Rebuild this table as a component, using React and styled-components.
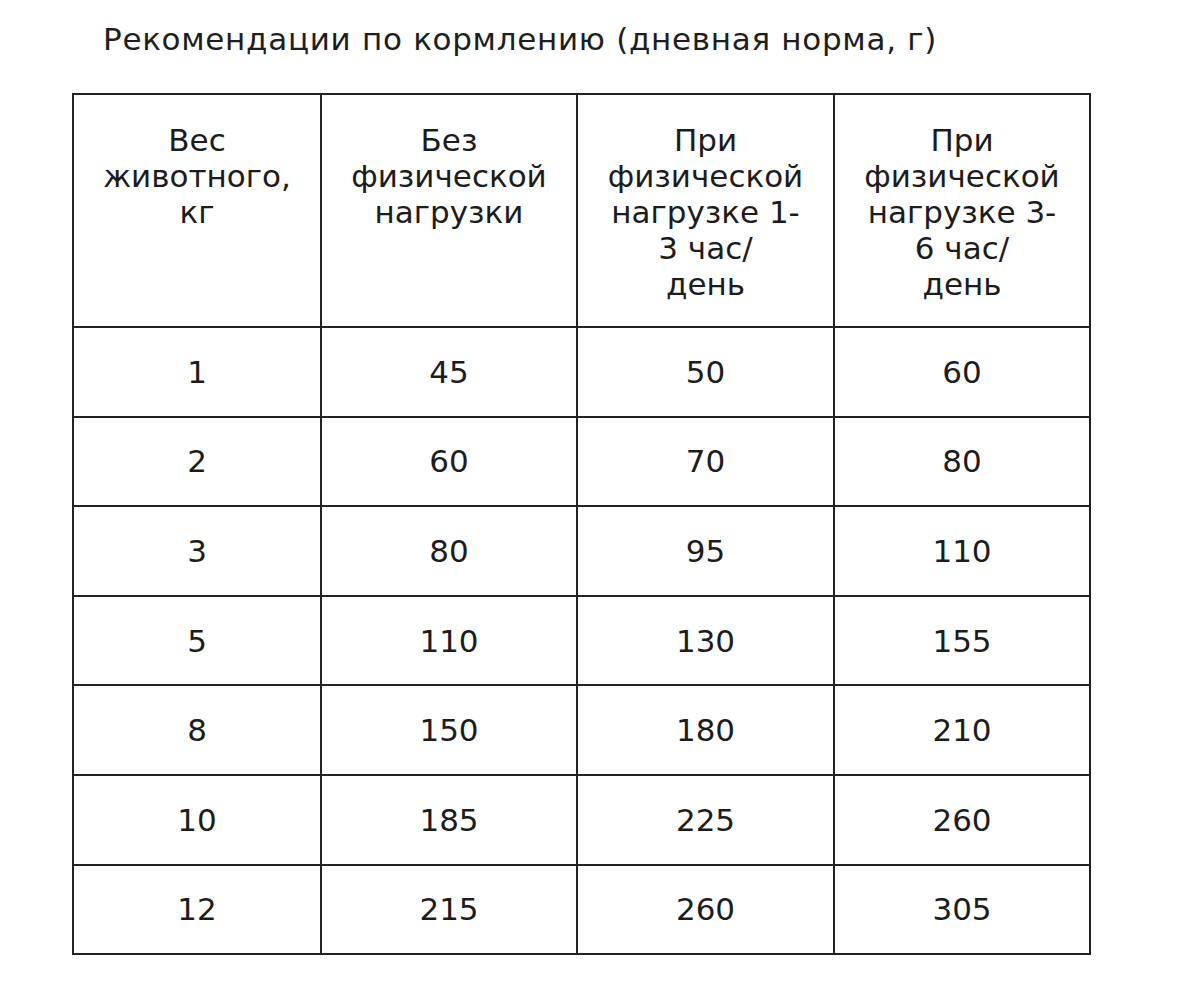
import React from "react";
import styled, { createGlobalStyle } from "styled-components";

const GlobalStyle = createGlobalStyle`
  html, body {
    margin: 0;
    padding: 0;
    background: #ffffff;
  }
  body {
    font-family: "DejaVu Sans", "Noto Sans", sans-serif;
    color: #1c1c1c;
  }
`;

const header = [
  ["Вес", "животного,", "кг"],
  ["Без", "физической", "нагрузки"],
  ["При", "физической", "нагрузке 1-", "3 час/", "день"],
  ["При", "физической", "нагрузке 3-", "6 час/", "день"],
];

const colWidths = [248, 256, 257, 256];

const rows = [
  ["1", "45", "50", "60"],
  ["2", "60", "70", "80"],
  ["3", "80", "95", "110"],
  ["5", "110", "130", "155"],
  ["8", "150", "180", "210"],
  ["10", "185", "225", "260"],
  ["12", "215", "260", "305"],
];

const App = () => {
  return (
    <Page>
      <GlobalStyle />
      <Title>Рекомендации по кормлению (дневная норма, г)</Title>
      <Table>
        <colgroup>
          {colWidths.map((w, i) => (
            <col key={i} style={{ width: w }} />
          ))}
        </colgroup>
        <thead>
          <tr>
            {header.map((lines, i) => (
              <HeadCell key={i}>
                {lines.map((line, j) => (
                  <Line key={j}>{line}</Line>
                ))}
              </HeadCell>
            ))}
          </tr>
        </thead>
        <tbody>
          {rows.map((row, i) => (
            <tr key={i}>
              {row.map((value, j) => (
                <Cell key={j}>{value}</Cell>
              ))}
            </tr>
          ))}
        </tbody>
      </Table>
    </Page>
  );
};

export default App;

const Page = styled.div`
  width: 1200px;
  height: 998px;
  box-sizing: border-box;
  padding: 19px 0 0 72px;
`;

const Title = styled.div`
  font-size: 31px;
  line-height: 40px;
  letter-spacing: 0.7px;
  padding-left: 31px;
  margin-bottom: 34px;
  color: #1e1e1e;
  white-space: nowrap;
`;

const Table = styled.table`
  width: 1017px;
  border-collapse: collapse;
  table-layout: fixed;
  border: 2px solid #222;
`;

const HeadCell = styled.th`
  font-weight: 400;
  font-size: 31px;
  line-height: 36px;
  height: 233px;
  vertical-align: top;
  padding: 27px 2px 0;
  border: 2px solid #222;
  text-align: center;
  box-sizing: border-box;
`;

const Line = styled.div`
  white-space: nowrap;
`;

const Cell = styled.td`
  font-size: 31px;
  height: 89.6px;
  padding: 0;
  text-align: center;
  vertical-align: middle;
  border: 2px solid #222;
  box-sizing: border-box;
`;
